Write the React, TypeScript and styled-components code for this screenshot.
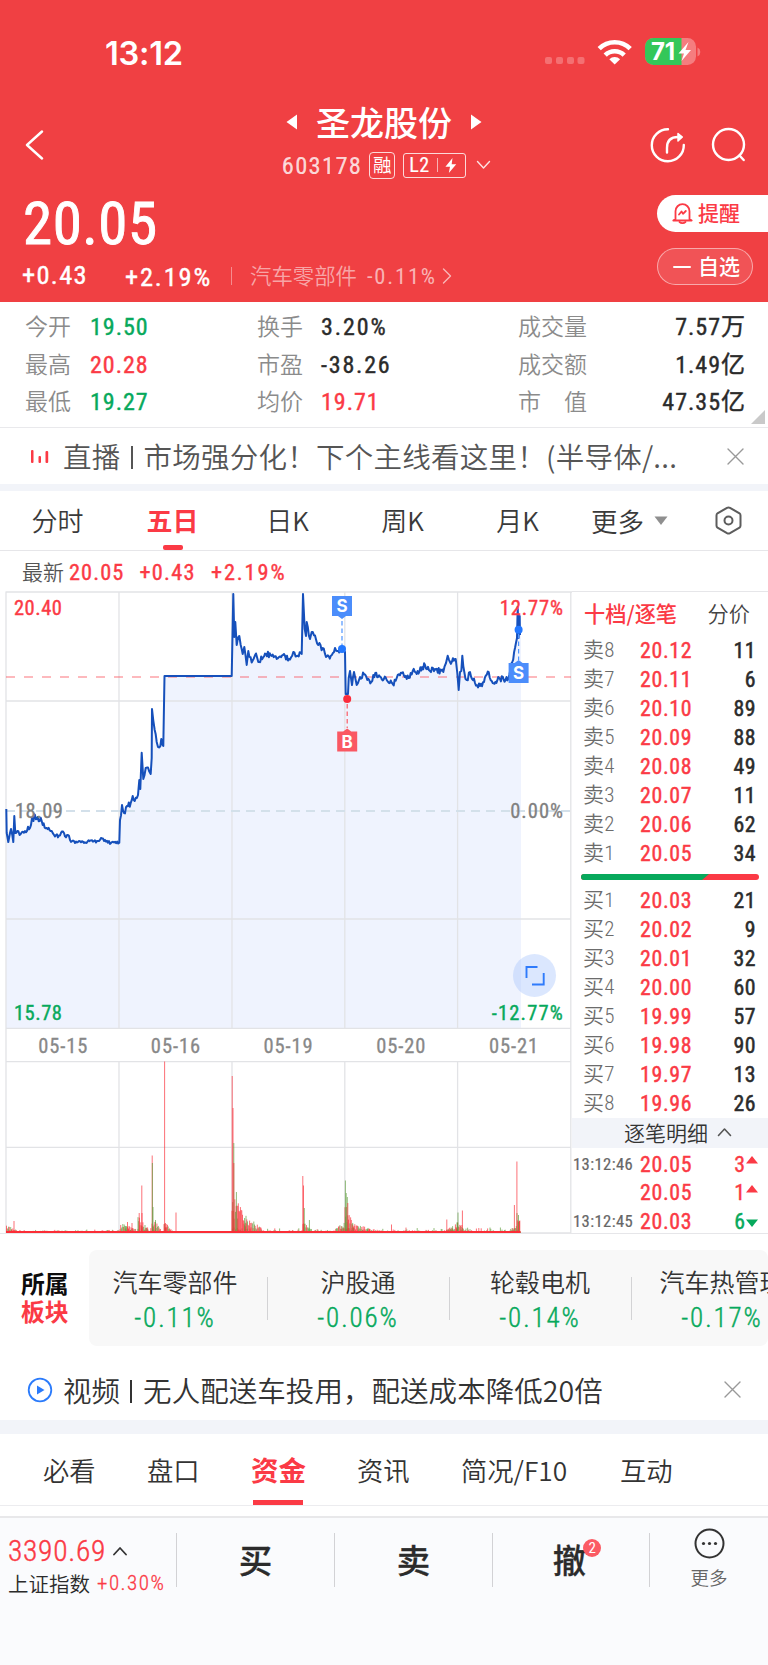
import React from "react";
import styled, { createGlobalStyle, css } from "styled-components";

const RED = "#fb3a45";
const GREEN = "#07a95c";
const INK = "#2b2b2b";
const BRAND = "#f04043";

const CJK = `"Noto Sans CJK SC", sans-serif`;
const DIGITS = `"Roboto Condensed", "Noto Sans CJK SC", sans-serif`;

const GlobalStyle = createGlobalStyle`
  * { box-sizing: border-box; }
  body { margin: 0; background: #fff; color: ${INK}; font-family: ${CJK}; }
  svg { display: block; flex: none; }
`;

const Screen = styled.main`
  width: 768px;
  height: 1665px;
  display: flex;
  flex-direction: column;
  overflow: hidden;
  background: #fff;
`;

/* Numerals share one condensed face; weight is tuned with a hairline stroke. */
const Num = styled.span<{ $size: number; $color?: string; $gap?: number; $heavy?: number }>`
  font-family: ${DIGITS};
  font-size: ${p => p.$size}px;
  letter-spacing: ${p => p.$gap ?? 0}px;
  color: ${p => p.$color ?? "inherit"};
  -webkit-text-stroke: ${p => p.$heavy ?? 0.4}px currentColor;
  white-space: nowrap;
`;

/* ---------- Header ---------- */

const Header = styled.header`
  height: 302px;
  background: ${BRAND};
  color: #fff;
  display: flex;
  flex-direction: column;
`;

const StatusBar = styled.div`
  height: 102px;
  padding: 1px 67px 0 105px;
  display: flex;
  align-items: center;
`;

const Clock = styled.time`
  flex: 1;
  padding-top: 2px;
  font: 600 32.6px/40px Inter, sans-serif;
  letter-spacing: -0.2px;
`;

const StatusIcons = styled.svg`
  width: 158px;
  height: 30px;
`;

const NavBar = styled.div`
  height: 86px;
  display: grid;
  grid-template-columns: 180px 1fr 180px;
`;

const BackButton = styled.div`
  padding: 28px 0 0 24px;
`;

const NavTools = styled.div`
  padding: 24px 0 0 60px;
  display: flex;
  gap: 24px;
`;

const TitleBlock = styled.div`
  display: flex;
  flex-direction: column;
  align-items: center;
`;

const TitleLine = styled.h1`
  margin: 0;
  height: 42px;
  padding-bottom: 2px;
  display: flex;
  align-items: center;
  gap: 18px;
  font: 500 34px/40px ${CJK};
`;

const CodeLine = styled.div`
  height: 40px;
  padding: 2px 0 0 5px;
  display: flex;
  align-items: center;
`;

const MarginTag = styled.span`
  width: 26px;
  height: 27px;
  margin: 0 8px 0 7px;
  border: 1.5px solid rgba(255, 255, 255, 0.8);
  border-radius: 4px;
  font: 400 18.5px/22px ${CJK};
  text-align: center;
`;

const LevelTag = styled.span`
  width: 63px;
  height: 25px;
  margin-right: 10px;
  padding: 0 8px 0 5px;
  border: 1.5px solid rgba(255, 255, 255, 0.8);
  border-radius: 3px;
  display: flex;
  align-items: center;
  justify-content: space-between;
`;

const TagRule = styled.i`
  width: 1px;
  height: 14px;
  background: rgba(255, 255, 255, 0.6);
`;

const QuoteArea = styled.div`
  flex: 1;
  display: flex;
  justify-content: space-between;
`;

const QuoteMain = styled.div`
  padding-left: 22px;
  display: flex;
  flex-direction: column;
`;

const LastPrice = styled.div`
  height: 70px;
  padding-left: 1px;
  line-height: 71px;
`;

const ChangeLine = styled.div`
  height: 36px;
  display: flex;
  align-items: center;
  line-height: 37px;
`;

const ChangeAmount = styled.span`
  width: 103px;
`;

const ChangeRule = styled.i`
  width: 1px;
  height: 18px;
  margin: 0 18px 0 19px;
  background: rgba(255, 255, 255, 0.4);
`;

const IndustryName = styled.span`
  width: 117px;
  padding-bottom: 3px;
  font-size: 21.4px;
  line-height: 32px;
  font-weight: 350;
  color: rgba(255, 255, 255, 0.55);
`;

const QuoteActions = styled.div`
  width: 111px;
  padding-top: 7px;
  display: flex;
  flex-direction: column;
  gap: 16px;
`;

const Pill = styled.button<{ $solid?: boolean }>`
  width: ${p => (p.$solid ? 111 : 96)}px;
  height: 37px;
  padding: 0 0 0 15px;
  display: flex;
  align-items: center;
  gap: 5px;
  font: 500 21px/30px ${CJK};
  ${p => p.$solid
    ? css`
        border: 0;
        border-radius: 19px 0 0 19px;
        background: #fff;
        color: ${RED};
      `
    : css`
        border: 1px solid rgba(255, 255, 255, 0.5);
        border-radius: 19px;
        background: rgba(255, 255, 255, 0.1);
        color: #fff;
        gap: 7px;
      `}
`;

const PillLabel = styled.span`
  padding-bottom: 3px;
`;

/* ---------- Stats ---------- */

const Stats = styled.section`
  position: relative;
  height: 126px;
  padding: 7px 22px 0 25px;
  border-bottom: 1px solid #e9e9ec;
  display: grid;
  grid-template-columns: 232px 261px 1fr;
  grid-auto-rows: 37.4px;
  align-items: center;
`;

const Stat = styled.div<{ $spread?: boolean }>`
  display: flex;
  align-items: center;
  justify-content: ${p => (p.$spread ? "space-between" : "flex-start")};
  line-height: 37px;
`;

const StatLabel = styled.span<{ $w: number }>`
  width: ${p => p.$w}px;
  font-size: 23px;
  font-weight: 350;
  line-height: 34px;
  color: #8b8b8b;
  padding-bottom: 5px;
  white-space: pre;
`;

const Corner = styled.svg`
  position: absolute;
  right: 3px;
  bottom: 3px;
`;

/* ---------- Notices ---------- */

const Notice = styled.section<{ $h: number; $tone: string; $drop: number; $icon: number; $right: number }>`
  height: ${p => p.$h}px;
  padding: ${p => p.$drop}px ${p => p.$right}px 0 ${p => p.$icon}px;
  display: flex;
  align-items: center;
  color: ${p => p.$tone};
`;

const NoticeText = styled.p<{ $ml: number; $gap: number }>`
  flex: 1;
  margin: 0 0 0 ${p => p.$ml}px;
  display: flex;
  align-items: center;
  font-size: 28.5px;
  letter-spacing: ${p => p.$gap}px;
  line-height: 42px;
  font-weight: 350;
  white-space: nowrap;
`;

const NoticeRule = styled.i`
  width: 2px;
  height: 23px;
  margin: 3px 11px 0 10px;
  background: currentColor;
`;

const Band = styled.div<{ $h: number }>`
  height: ${p => p.$h}px;
  flex: none;
  background: #f2f4f9;
`;

/* ---------- Period tabs ---------- */

const PeriodTabs = styled.nav`
  height: 60px;
  padding: 0 26px 0 0;
  border-bottom: 1.5px solid #e6e6e9;
  display: grid;
  grid-template-columns: 115px 115px 115px 115px 115px 1fr auto;
  align-items: stretch;
`;

const PeriodTab = styled.span<{ $active?: boolean }>`
  display: flex;
  flex-direction: column;
  align-items: center;
  justify-content: space-between;
  font-size: 26px;
  line-height: 57px;
  color: ${p => (p.$active ? RED : "#3a3a3a")};
  font-weight: ${p => (p.$active ? 700 : 350)};
`;

const PeriodMark = styled.i`
  width: 20px;
  height: 5px;
  margin-top: -4px;
  border-radius: 2px;
  background: ${RED};
`;

const MoreTab = styled.span`
  padding-left: 16px;
  display: flex;
  align-items: center;
  gap: 10px;
  font-size: 26.5px;
  font-weight: 350;
  line-height: 57px;
  color: #3a3a3a;
`;

const Settings = styled.span`
  display: flex;
  align-items: center;
`;

const LatestLine = styled.div`
  height: 40px;
  padding: 2px 0 0 22px;
  display: flex;
  align-items: center;
  line-height: 36px;
`;

const LatestFigures = styled.span`
  display: flex;
  gap: 15px;
`;

const LatestLabel = styled.span`
  width: 47px;
  font-size: 21px;
  font-weight: 350;
  color: #555;
  line-height: 30px;
  padding-bottom: 2px;
`;

/* ---------- Market area ---------- */

const Market = styled.section`
  height: 643px;
  display: grid;
  grid-template-columns: 572px 1fr;
  border-bottom: 1px solid #e6e6e9;
`;

const ChartSvg = styled.svg`
  width: 572px;
  height: 642px;
`;

const AxisText = styled.text<{ $gap?: number }>`
  font-family: ${DIGITS};
  font-size: 20.5px;
  letter-spacing: ${p => p.$gap ?? 0.5}px;
`;

const FlagText = styled.text`
  font: 700 17px Inter, sans-serif;
`;

const Book = styled.aside`
  border-top: 1.5px solid #e6e6e9;
  display: flex;
  flex-direction: column;
`;

const BookHead = styled.div`
  height: 44px;
  padding: 0 18px 3px 12px;
  display: flex;
  align-items: center;
  justify-content: space-between;
  font-size: 21.2px;
  line-height: 36px;
  font-weight: 350;
  color: #444;
  b { color: ${RED}; font-weight: 500; }
`;

const BookRow = styled.div`
  height: 29px;
  padding: 0 12px 0 11px;
  display: grid;
  grid-template-columns: 57px 1fr auto;
  align-items: center;
  line-height: 29px;
`;

const Side = styled.span`
  font: 350 21px/29px ${DIGITS};
  letter-spacing: 0.3px;
  color: #6c6c6c;
  white-space: nowrap;
`;

const Balance = styled.svg`
  width: 178px;
  height: 6px;
  margin: 5.5px 0 6.5px 9px;
`;

const DetailHead = styled.div`
  height: 30px;
  padding: 0 0 2px 52px;
  display: flex;
  align-items: center;
  gap: 9px;
  background: #f2f4f9;
  font-size: 21px;
  font-weight: 350;
  line-height: 28px;
  color: #333;
`;

const TickRow = styled.div`
  height: 28.8px;
  padding: 1.5px 10px 0 1px;
  display: grid;
  grid-template-columns: 67px 1fr auto 13px;
  align-items: center;
  line-height: 29px;
`;

const TickArrow = styled.svg`
  justify-self: end;
`;

/* ---------- Sectors ---------- */

const Sectors = styled.section`
  height: 112px;
  padding: 16px 0 0 21px;
  display: flex;
`;

const SectorTitle = styled.div`
  width: 68px;
  padding-top: 19px;
  font-size: 23.8px;
  font-weight: 700;
  line-height: 28px;
  color: #0c0c0c;
  span { display: block; color: ${RED}; }
`;

const SectorList = styled.div`
  flex: 1;
  height: 96px;
  border-radius: 8px;
  background: #f8f8f8;
  display: flex;
  align-items: center;
  overflow: hidden;
`;

const Sector = styled.div`
  flex: none;
  width: 182px;
  padding-top: 3px;
  display: flex;
  flex-direction: column;
  align-items: center;
  font-size: 25px;
  font-weight: 350;
  line-height: 37px;
  color: #333;
  white-space: nowrap;
  &:first-child { width: 178px; padding-right: 6px; }
`;

const SectorRule = styled.i`
  flex: none;
  width: 1px;
  height: 43px;
  margin-right: -1px;
  background: #d3d3d5;
`;

/* ---------- Content tabs ---------- */

const ContentTabs = styled.nav`
  height: 72px;
  padding-left: 43px;
  border-bottom: 1px solid #ececef;
  display: flex;
`;

const ContentTab = styled.span<{ $active?: boolean; $w: number }>`
  width: ${p => p.$w}px;
  display: flex;
  flex-direction: column;
  justify-content: space-between;
  font-size: ${p => (p.$active ? 27.5 : 26.3)}px;
  font-weight: ${p => (p.$active ? 700 : 350)};
  line-height: 71px;
  color: ${p => (p.$active ? RED : "#333")};
  white-space: nowrap;
`;

const ContentMark = styled.i`
  width: 50px;
  height: 5px;
  margin: -5px 0 0 2px;
  background: ${RED};
`;

/* ---------- Bottom bar ---------- */

const BottomBar = styled.footer`
  flex: 1;
  margin-top: 10px;
  border-top: 2px solid #e8e8ea;
  background: #fafbfd;
  display: grid;
  grid-template-columns: 176px 158px 158px 157px 1fr;
  align-items: start;
`;

const IndexCell = styled.div`
  padding: 14px 0 0 8px;
  display: flex;
  flex-direction: column;
`;

const IndexLine = styled.div<{ $h: number }>`
  height: ${p => p.$h}px;
  display: flex;
  align-items: center;
  gap: 7px;
  line-height: ${p => p.$h}px;
  font-size: 20.5px;
  font-weight: 350;
  white-space: nowrap;
`;

const TradeCell = styled.div<{ $shift?: number }>`
  height: 54px;
  margin-top: 15px;
  border-left: 1px solid #d2d2d5;
  display: flex;
  align-items: center;
  justify-content: center;
  font-size: 33.5px;
  font-weight: 500;
  line-height: 54px;
  padding: 0 ${p => p.$shift ?? 0}px 3px 0;
  -webkit-text-stroke: 0.3px currentColor;
`;

const BadgeAnchor = styled.span`
  position: relative;
`;

const Badge = styled.span`
  position: absolute;
  top: 7px;
  right: -15px;
  width: 18px;
  height: 18px;
  border-radius: 9px;
  background: #fb5b64;
  color: #fff;
  font: 400 15px/18px ${DIGITS};
  -webkit-text-stroke: 0;
  text-align: center;
`;

const MoreCell = styled.div`
  height: 54px;
  margin-top: 15px;
  border-left: 1px solid #d2d2d5;
  display: flex;
  flex-direction: column;
  align-items: center;
  font-size: 18.5px;
  font-weight: 350;
  line-height: 26px;
  color: #666;
  svg { margin: -5px 0 5px; }
`;

/* ---------- Icons ---------- */

const Bolt = ({ h, color = "#fff" }: { h: number; color?: string }) => (
  <svg width={h * 0.78} height={h} viewBox="0 0 14 18" fill={color}>
    <path d="M9 0 0.5 10.4H6L4.6 18 13.5 7.4H8z" />
  </svg>
);

const Caret = ({ w, h, d, color, sw = 1.6 }: { w: number; h: number; d: string; color: string; sw?: number }) => (
  <svg width={w} height={h} viewBox={`0 0 ${w} ${h}`} fill="none" stroke={color} strokeWidth={sw}
    strokeLinecap="round" strokeLinejoin="round">
    <path d={d} />
  </svg>
);

const Cross = () => <Caret w={17} h={17} d="M1 1 16 16M16 1 1 16" color="#999" sw={1.4} />;

/* ---------- Chart data ---------- */

const seeded = (seed: number) => () => {
  seed = (seed * 1103515245 + 12345) % 2147483648;
  return seed / 2147483648;
};

const PRICE: [number, number][] = [
  [6.3, 809], [6.7, 833], [8.3, 842], [10, 833], [11, 829], [12.3, 835], [13.3, 842], [14.3, 816], [15.3, 833],
  [17.3, 831], [20.7, 834], [25, 831], [30, 828], [32, 818], [33.5, 821], [34, 814], [36.7, 819], [41.7, 821], [46.7, 828],
  [51.7, 831], [55, 836.5], [60, 835.5], [64, 833], [70, 840], [75, 843], [83, 841.7], [93, 841.7], [99, 841],
  [101, 838], [104, 841], [111, 843], [115, 841.7], [119.3, 842.7], [120, 820], [122, 805], [124, 813], [127, 806], [130.7, 803], [132.7, 796],
  [134.7, 801], [138, 795], [139.3, 780], [140.3, 789], [141.7, 752.7], [143.3, 779], [145.7, 768], [148, 767.5], [150.7, 774],
  [151.7, 758], [152, 709], [154.7, 730], [156.7, 742], [159.3, 747.5], [161.3, 739], [163.3, 746], [164.5, 676],
  [231.7, 676], [232.7, 625], [233.3, 594], [234.3, 637], [235.3, 622], [236.7, 645], [239.3, 636], [240.7, 645],
  [242.7, 654], [244.3, 647], [246.7, 665], [248.3, 651], [251.7, 662.5], [256, 653.5], [258.3, 662], [266, 654],
  [271.7, 656], [276.7, 659], [283, 655], [290, 659.5], [293.3, 652], [296.7, 656], [301.7, 654], [303, 594],
  [304.7, 629], [306, 636], [306.7, 622], [310, 639], [311.7, 632], [315, 635.5], [318.3, 645], [322.7, 648],
  [326, 657], [330.7, 656], [335, 648], [337.3, 651], [342, 649], [345, 652], [345.7, 694], [348, 694],
  [348.7, 678], [350, 671], [352, 685], [354, 672], [356.7, 685], [359, 680], [364, 674], [367.3, 680], [371.3, 682],
  [375.3, 673], [380, 676.7], [386.7, 680], [392.7, 684], [396.7, 678], [402, 673], [406.7, 679], [412.7, 671],
  [416.7, 674], [425, 665], [430, 671], [435, 669], [443.3, 672], [446, 663], [447.7, 655.7], [450, 662],
  [455.7, 659], [457.3, 673], [458.7, 690], [460, 672], [461.3, 671], [462.3, 655.7], [464.3, 672], [466.7, 680],
  [470, 672], [475, 683], [480, 686], [484, 682], [488.7, 672], [492.7, 683], [500, 679], [508.3, 679], [512.3, 662],
  [515, 648], [517, 638], [517.7, 607], [518.6, 638], [519.7, 616], [520, 635],
];

const priceLine = (() => {
  const rnd = seeded(11);
  const out: string[] = [];
  PRICE.forEach(([x, y], i) => {
    out.push(`${x},${y}`);
    const next = PRICE[i + 1];
    if (!next) return;
    const flat = y === 676 && next[1] === 676;
    const gap = next[0] - x;
    if (flat || gap < 1.6) return;
    const calm = x > 72 && x < 119;
    const steps = Math.floor(gap / 0.9);
    for (let k = 1; k < steps; k++) {
      const t = k / steps;
      const jitter = (rnd() - 0.5) * (calm ? 3 : 6);
      out.push(`${(x + gap * t).toFixed(1)},${(y + (next[1] - y) * t + jitter).toFixed(1)}`);
    }
  });
  return out.join(" ");
})();

type Bar = { x: number; h: number; c: string };
const V_RED = "#fb2d36";
const V_GREEN = "#5f9d3c";

const SPIKES: Bar[] = [
  [14, 12, 0], [127.5, 11, 0], [132, 10, 0], [139.2, 20, 0], [141.8, 47.5, 0], [142, 20, 0], [152.2, 77.5, 0], [152.4, 70, 1],
  [153, 26, 1], [155.5, 13, 1], [164.6, 171.5, 0], [165.4, 10, 0], [166.2, 9, 0], [176, 20.5, 0],
  [232.2, 157, 0], [233, 125, 0], [233.8, 90, 1], [233.8, 70, 0], [236.4, 41, 1], [237.8, 27, 0],
  [302.8, 57, 0], [303.5, 47.5, 0], [304.3, 25, 1], [309.4, 13, 1], [345.4, 52.5, 1], [346.2, 40, 1], [347.3, 36, 1],
  [347.8, 30, 0], [391.5, 8.5, 0], [446.8, 13.5, 0], [458, 20.5, 1], [462.4, 22.5, 0], [514.4, 28, 0], [516.9, 71.5, 0],
  [518.5, 18, 1], [519.4, 12, 0],
].map(([x, h, g]) => ({ x, h, c: g ? V_GREEN : V_RED }));

const SWELLS: [number, number, number, number][] = [
  [6.5, 17, 9, 3], [120, 136, 10, 5], [138, 149, 18, 3], [152, 160, 20, 4], [164, 174, 12, 2], [232, 246, 40, 18], [244, 262, 17, 7],
  [303, 312, 17, 3], [345, 354, 32, 12], [352, 372, 11, 4], [457, 466, 12, 5], [517, 520.5, 20, 14], [335, 345, 4, 13], [447, 458, 4, 11],
  [510, 517, 3, 14],
];

const volumeBars: Bar[] = (() => {
  const rnd = seeded(7);
  const bars: Bar[] = [];
  for (let x = 6.8; x < 520.5; x += 0.8) {
    if (x > 174 && x < 231.5) continue;
    const quiet = x < 119 ? 2.5 : 4.5;
    bars.push({ x, h: 1 + rnd() ** 3 * quiet, c: rnd() > 0.5 ? V_RED : V_GREEN });
  }
  SWELLS.forEach(([a, b, from, to]) => {
    for (let x = a; x < b; x += 0.7) {
      const t = (x - a) / (b - a);
      bars.push({ x, h: (from + (to - from) * t) * (0.35 + rnd() * 0.65), c: rnd() > 0.5 ? V_RED : V_GREEN });
    }
  });
  return bars.concat(SPIKES);
})();

const COLUMNS = [119, 232, 344.8, 457.6];
const DATES = ["05-15", "05-16", "05-19", "05-20", "05-21"];

const Flag = ({ x, y, up, label, color }: { x: number; y: number; up?: boolean; label: string; color: string }) => (
  <g>
    <path d={up
      ? `M${x - 10} ${y}h6l4-3 4 3h6v20h-20z`
      : `M${x - 10} ${y}h20v20h-6l-4 3-4-3h-6z`} fill={color} />
    <FlagText x={x} y={y + 16.2} fill="#fff" textAnchor="middle">{label}</FlagText>
  </g>
);

const MarketChart = () => (
  <ChartSvg viewBox="0 591 572 642">
    <polygon points={`6,1028 ${priceLine} 521,635 521,1028`} fill="#eff3fe" />
    <g stroke="#e2e3e6" strokeWidth="1.3" fill="none">
      <path d="M5.5 592H572M6 592V1233M570.8 592V1233M6 701H571M6 919H571M6 1028.4H571M6 1061.7H571M6 1147.3H571M6 1233H571" />
      {COLUMNS.map(x => <path key={x} d={`M${x} 592V1028M${x} 1062V1233`} />)}
    </g>
    <path d="M6 811H571" stroke="#d3e0ea" strokeWidth="1.8" strokeDasharray="9 6" />
    <path d="M6 677H571" stroke="#fa3d47" strokeOpacity="0.36" strokeWidth="1.8" strokeDasharray="9 9" />
    <polyline points={priceLine} fill="none" stroke="#1650bb" strokeWidth="2" strokeLinejoin="round" />

    <g strokeWidth="1.2" strokeDasharray="4.5 3">
      <path d="M342 621V646M518.6 634V660" stroke="#4d94ff" />
      <path d="M347.2 704V728" stroke="#fb5b64" />
    </g>
    <circle cx="342" cy="649" r="4" fill="#2378ff" />
    <circle cx="518.6" cy="629.7" r="4" fill="#2378ff" />
    <circle cx="347.2" cy="699" r="4" fill="#fb2d3c" />
    <Flag x={342} y={596} label="S" color="#4b8dfb" />
    <Flag x={347.2} y={731.5} up label="B" color="#fa5863" />
    <Flag x={518.6} y={663} up label="S" color="#4b8dfb" />

    <g fill={RED} stroke={RED} strokeWidth="0.4">
      <AxisText x="14" y="615.3">20.40</AxisText>
      <AxisText x="564" y="615.3" textAnchor="end" $gap={0.9}>12.77%</AxisText>
    </g>
    <g fill="#808080" stroke="#808080" strokeWidth="0.3">
      <AxisText x="15" y="818">18.09</AxisText>
      <AxisText x="564" y="818" textAnchor="end" $gap={1}>0.00%</AxisText>
    </g>
    <g fill={GREEN} stroke={GREEN} strokeWidth="0.4">
      <AxisText x="14" y="1020.3">15.78</AxisText>
      <AxisText x="564" y="1020.3" textAnchor="end" $gap={1.2}>-12.77%</AxisText>
    </g>
    <g fill="#888" stroke="#888" strokeWidth="0.3">
      {DATES.map((d, i) => (
        <AxisText key={d} x={63.2 + i * 112.7} y="1053" textAnchor="middle" $gap={0.9}>{d}</AxisText>
      ))}
    </g>

    <circle cx="534.5" cy="975.5" r="21.5" fill="#a9c6fd" fillOpacity="0.42" />
    <path d="M537.5 967H526.5V978M532 984.5H543.7V973" fill="none" stroke="#2f7bfb" strokeWidth="1.9" />

    {volumeBars.map((b, i) => (
      <rect key={i} x={b.x - 0.5} y={1233 - b.h} width="1" height={b.h} fill={b.c} fillOpacity="0.68" />
    ))}
    <path d="M6 1232H520.5" stroke={V_RED} strokeWidth="1.8" />
  </ChartSvg>
);

/* ---------- Data ---------- */

const STATS: [string, string, string, number][][] = [
  [["今开", "19.50", GREEN, 1], ["换手", "3.20%", INK, 1.9], ["成交量", "7.57万", INK, 1]],
  [["最高", "20.28", RED, 1], ["市盈", "-38.26", INK, 1.8], ["成交额", "1.49亿", INK, 1]],
  [["最低", "19.27", GREEN, 1], ["均价", "19.71", RED, 1], ["市　值", "47.35亿", INK, 1]],
];

const ASKS = [["卖8", "20.12", "11"], ["卖7", "20.11", "6"], ["卖6", "20.10", "89"], ["卖5", "20.09", "88"],
  ["卖4", "20.08", "49"], ["卖3", "20.07", "11"], ["卖2", "20.06", "62"], ["卖1", "20.05", "34"]];
const BIDS = [["买1", "20.03", "21"], ["买2", "20.02", "9"], ["买3", "20.01", "32"], ["买4", "20.00", "60"],
  ["买5", "19.99", "57"], ["买6", "19.98", "90"], ["买7", "19.97", "13"], ["买8", "19.96", "26"]];
const TICKS: [string, string, string, boolean][] = [
  ["13:12:46", "20.05", "3", true], ["", "20.05", "1", true], ["13:12:45", "20.03", "6", false]];
const SECTORS = [["汽车零部件", "-0.11%"], ["沪股通", "-0.06%"], ["轮毂电机", "-0.14%"], ["汽车热管理", "-0.17%"]];
const TABS: [string, number][] = [["必看", 104], ["盘口", 104], ["资金", 106], ["资讯", 104], ["简况/F10", 159], ["互动", 60]];

const Level = ({ row }: { row: string[] }) => (
  <BookRow>
    <Side>{row[0]}</Side>
    <Num $size={21.8} $gap={0.7} $color={RED} $heavy={0.45}>{row[1]}</Num>
    <Num $size={21.8} $gap={0.5} $heavy={0.5}>{row[2]}</Num>
  </BookRow>
);

export default function App() {
  return (
    <Screen>
      <GlobalStyle />
      <Header>
        <StatusBar>
          <Clock>13:12</Clock>
          <StatusIcons viewBox="543 37 158 30">
            <g fill="#fff" fillOpacity="0.25">
              {[545, 556, 567, 577.5].map(x => <rect key={x} x={x} y="57" width="7" height="7" rx="2" />)}
            </g>
            <g fill="none" stroke="#fff" strokeWidth="4.6">
              <path d="M599.2 48.6a22 22 0 0 1 31 0" />
              <path d="M605.2 55.2a13.5 13.5 0 0 1 19 0" />
            </g>
            <path d="M609.3 59.3a7.6 7.6 0 0 1 10.8 0L614.7 64.6z" fill="#fff" />
            <rect x="645" y="38" width="51" height="27" rx="8.5" fill="#fff" fillOpacity="0.32" />
            <path d="M653.5 38H681.5V65H653.5A8.5 8.5 0 0 1 645 56.5V46.5A8.5 8.5 0 0 1 653.5 38z" fill="#34c759" />
            <path d="M697.5 47.5a5 5 0 0 1 0 9z" fill="#fff" fillOpacity="0.32" />
            <text x="651" y="60" fill="#fff" fontFamily="Inter, sans-serif" fontWeight="700" fontSize="24" letterSpacing="-0.3">71</text>
            <path d="M688.500 42 678.500 53.500H684L681.500 61 691 50H685.500z" fill="#fff" />
          </StatusIcons>
        </StatusBar>
        <NavBar>
          <BackButton>
            <Caret w={20} h={30} d="M18 1.5 3 15 18 28.5" color="#fff" sw={2.4} />
          </BackButton>
          <TitleBlock>
            <TitleLine>
              <svg width="12" height="16" viewBox="0 0 12 16" fill="#fff"><path d="M0.5 8 11 0.5V15.5z" /></svg>
              圣龙股份
              <svg width="12" height="16" viewBox="0 0 12 16" fill="#fff"><path d="M11.5 8 1 0.5V15.5z" /></svg>
            </TitleLine>
            <CodeLine>
              <Num $size={24.5} $gap={1.3} $heavy={0.2} $color="rgba(255,255,255,.8)">603178</Num>
              <MarginTag>融</MarginTag>
              <LevelTag>
                <Num $size={20} $gap={0.5} $heavy={0.2}>L2</Num>
                <TagRule />
                <Bolt h={15} />
              </LevelTag>
              <Caret w={15} h={10} d="M1.5 1.5 7.5 8 13.5 1.5" color="rgba(255,255,255,.85)" sw={1.4} />
            </CodeLine>
          </TitleBlock>
          <NavTools>
            <svg width="38" height="38" viewBox="648 126 38 38" fill="none" stroke="#fff" strokeWidth="2.4" strokeLinecap="round" strokeLinejoin="round">
              <path d="M668 129.3A16 16 0 1 0 683.8 145" />
              <path d="M667 152.5V148C667 141 671 137 678 137H681" />
              <path d="M678 133.5 682.3 137 678 141z" fill="#fff" strokeWidth="1.5" />
            </svg>
            <svg width="38" height="38" viewBox="710 127 38 38" fill="none" stroke="#fff" strokeWidth="2.4" strokeLinecap="round">
              <circle cx="728.5" cy="145.5" r="15.5" />
              <path d="M739.5 156.5 743.7 161" />
            </svg>
          </NavTools>
        </NavBar>
        <QuoteArea>
          <QuoteMain>
            <LastPrice><Num $size={59} $gap={0.5} $heavy={0.9}>20.05</Num></LastPrice>
            <ChangeLine>
              <ChangeAmount><Num $size={26.5} $gap={1.3}>+0.43</Num></ChangeAmount>
              <Num $size={26.5} $gap={1.8}>+2.19%</Num>
              <ChangeRule />
              <IndustryName>汽车零部件</IndustryName>
              <Num $size={22.5} $gap={1.8} $heavy={0} $color="rgba(255,255,255,.62)">-0.11%</Num>
              <Caret w={19} h={16} d="M6.5 1 13.500 8 6.5 15" color="rgba(255,255,255,.62)" sw={1.4} />
            </ChangeLine>
          </QuoteMain>
          <QuoteActions>
            <Pill $solid>
              <svg width="21" height="21" viewBox="0 0 21 21" fill="none" stroke={RED} strokeWidth="1.8" strokeLinecap="round" strokeLinejoin="round">
                <path d="M3.5 16V8.200a7 7 0 0 1 14 0V16L19.700 17.5H1.300z" />
                <path d="M7.500 19Q10.500 21.200 13.500 19" />
                <path d="M7 11.5 9.5 8.5 11 10.8 13.8 8" />
              </svg>
              <PillLabel>提醒</PillLabel>
            </Pill>
            <Pill>
              <svg width="18" height="4" viewBox="0 0 18 4"><rect y="1" width="18" height="2" rx="1" fill="#fff" /></svg>
              <PillLabel>自选</PillLabel>
            </Pill>
          </QuoteActions>
        </QuoteArea>
      </Header>

      <Stats>
        {STATS.map(row => row.map(([label, value, color, gap], i) => (
          <Stat key={label} $spread={i === 2}>
            <StatLabel $w={i === 2 ? 90 : i === 1 ? 64 : 65}>{label}</StatLabel>
            <Num $size={24} $gap={gap} $color={color}>{value}</Num>
          </Stat>
        )))}
        <Corner width="14" height="14" viewBox="0 0 14 14"><path d="M14 0V14H0z" fill="#c9c9c9" /></Corner>
      </Stats>

      <Notice $h={56} $tone="#555" $drop={0} $icon={30} $right={24}>
        <svg width="19" height="16" viewBox="0 -2 19 16" fill={RED}>
          <rect x="1" y="0" width="2.500" height="13" rx="1" />
          <rect x="8.500" y="6" width="2.500" height="7" rx="1" />
          <rect x="15.500" y="1" width="2.700" height="12" rx="1" />
        </svg>
        <NoticeText $ml={14} $gap={0.25}>直播<NoticeRule />市场强分化！下个主线看这里！(半导体/...</NoticeText>
        <Cross />
      </Notice>
      <Band $h={7} />

      <PeriodTabs>
        <PeriodTab>分时</PeriodTab>
        <PeriodTab $active>五日<PeriodMark /></PeriodTab>
        <PeriodTab>日K</PeriodTab>
        <PeriodTab>周K</PeriodTab>
        <PeriodTab>月K</PeriodTab>
        <MoreTab>
          更多
          <svg width="14" height="9" viewBox="0 0 14 9"><path d="M0.5 0.5H13.5L7 9z" fill="#8f8f8f" /></svg>
        </MoreTab>
        <Settings>
          <svg width="27" height="29" viewBox="0 0 27 29" fill="none" stroke="#5c5c5c" strokeWidth="2" strokeLinejoin="round">
            <path d="M12 1.8Q13.5 1 15 1.8L24.5 7.3Q25.5 8 25.5 9.5V19.5Q25.5 21 24.5 21.7L15 27.2Q13.5 28 12 27.2L2.5 21.7Q1.5 21 1.5 19.5V9.5Q1.5 8 2.5 7.3z" />
            <circle cx="13.5" cy="14.5" r="4" />
          </svg>
        </Settings>
      </PeriodTabs>

      <LatestLine>
        <LatestLabel>最新</LatestLabel>
        <LatestFigures>
          <Num $size={22.3} $gap={1.1} $color={RED}>20.05</Num>
          <Num $size={22.3} $gap={1.3} $color={RED}>+0.43</Num>
          <Num $size={22.3} $gap={1.9} $color={RED}>+2.19%</Num>
        </LatestFigures>
      </LatestLine>

      <Market>
        <MarketChart />
        <Book>
          <BookHead><b>十档/逐笔</b><span>分价</span></BookHead>
          {ASKS.map(r => <Level key={r[0]} row={r} />)}
          <Balance viewBox="0 0 178 6">
            <rect width="178" height="6" rx="3" fill={RED} />
            <path d="M3 0H128L121 6H3A3 3 0 0 1 3 0z" fill={GREEN} />
          </Balance>
          {BIDS.map(r => <Level key={r[0]} row={r} />)}
          <DetailHead>
            逐笔明细
            <Caret w={15} h={10} d="M1.5 8.5 7.5 2 13.5 8.5" color="#555" />
          </DetailHead>
          {TICKS.map(([time, price, qty, up], i) => (
            <TickRow key={i}>
              <Num $size={16.6} $gap={0.4} $heavy={0.2} $color="#666">{time}</Num>
              <Num $size={21.8} $gap={0.7} $heavy={0.45} $color={RED}>{price}</Num>
              <Num $size={21.8} $heavy={0.4} $color={up ? RED : GREEN}>{qty}</Num>
              <TickArrow width="12" height="16" viewBox="0 0 12 16">
                <path d={up ? "M6 0 12 7.5H0z" : "M6 13 12 5.5H0z"} fill={up ? RED : GREEN} />
              </TickArrow>
            </TickRow>
          ))}
        </Book>
      </Market>

      <Sectors>
        <SectorTitle>所属<span>板块</span></SectorTitle>
        <SectorList>
          {SECTORS.map(([name, change], i) => (
            <React.Fragment key={name}>
              {i > 0 && <SectorRule />}
              <Sector>
                {name}
                <Num $size={27} $gap={1.9} $heavy={0.4} $color={GREEN}>{change}</Num>
              </Sector>
            </React.Fragment>
          ))}
        </SectorList>
      </Sectors>

      <Notice $h={74} $tone="#333" $drop={13} $icon={27} $right={27}>
        <svg width="26" height="26" viewBox="0 0 26 26">
          <circle cx="13" cy="13" r="11.3" fill="none" stroke="#2b7bfb" strokeWidth="1.8" />
          <path d="M10 8.5 17.5 13 10 17.5z" fill="#2b7bfb" />
        </svg>
        <NoticeText $ml={10} $gap={0.05}>视频<NoticeRule />无人配送车投用，配送成本降低20倍</NoticeText>
        <Cross />
      </Notice>
      <Band $h={14} />

      <ContentTabs>
        {TABS.map(([name, w]) => (
          <ContentTab key={name} $w={w} $active={name === "资金"}>
            {name}
            {name === "资金" && <ContentMark />}
          </ContentTab>
        ))}
      </ContentTabs>

      <BottomBar>
        <IndexCell>
          <IndexLine $h={38}>
            <Num $size={29.5} $gap={0.7} $color={RED}>3390.69</Num>
            <Caret w={14} h={10} d="M1 8.5 7 2 13 8.5" color="#333" sw={1.8} />
          </IndexLine>
          <IndexLine $h={26}>
            上证指数
            <Num $size={21} $gap={1.5} $color={RED} $heavy={0.3}>+0.30%</Num>
          </IndexLine>
        </IndexCell>
        <TradeCell>买</TradeCell>
        <TradeCell>卖</TradeCell>
        <TradeCell $shift={3}><BadgeAnchor>撤<Badge>2</Badge></BadgeAnchor></TradeCell>
        <MoreCell>
          <svg width="31" height="31" viewBox="0 0 31 31">
            <circle cx="15.5" cy="15.5" r="14" fill="none" stroke="#333" strokeWidth="2" />
            <g fill="#333"><circle cx="9.5" cy="15.5" r="1.6" /><circle cx="15.5" cy="15.5" r="1.6" /><circle cx="21.5" cy="15.5" r="1.6" /></g>
          </svg>
          更多
        </MoreCell>
      </BottomBar>
    </Screen>
  );
}
